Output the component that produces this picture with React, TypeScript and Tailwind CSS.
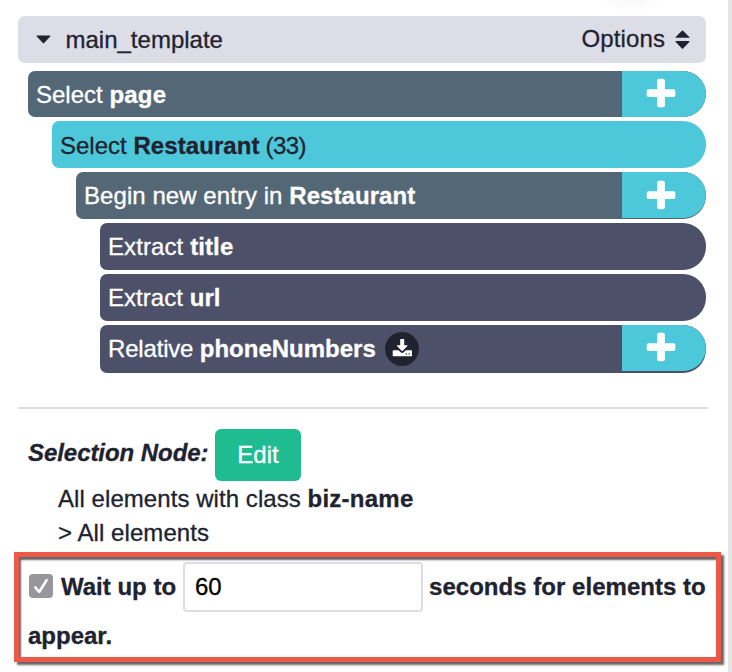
import type { ReactNode } from "react";

function Plus({ offset = "pb-[2px]" }: { offset?: string }) {
  return (
    <span className={`flex h-[46px] w-[84px] items-center justify-center rounded-r-[23px] bg-[#4dc8db] pr-[6px] ${offset}`}>
      <svg width="30" height="30" viewBox="0 0 30 30" fill="#fff">
        <rect x="0.7" y="11.2" width="28.6" height="7.8" rx="1.8" />
        <rect x="11.1" y="0.8" width="7.8" height="28.4" rx="1.8" />
      </svg>
    </span>
  );
}

function Row({ className, children, action }: { className: string; children: ReactNode; action?: ReactNode }) {
  return (
    <div className={`flex items-start justify-between overflow-hidden rounded-l-[7px] rounded-r-[23px] pl-2 ${className}`}>
      <div className="flex h-[47px] items-center whitespace-pre">{children}</div>
      {action}
    </div>
  );
}

function DownloadBadge() {
  return (
    <svg className="ml-[9px]" width="34" height="34" viewBox="0 0 34 34">
      <circle cx="17" cy="17" r="17" fill="#20232f" />
      <path d="M15.2 7.4q0-.5.5-.5h3q.5 0 .5.5v5.8h2.9q.8.2.3.9l-4.6 4.6q-.6.5-1.2 0L12 14.1q-.5-.7.3-.9h2.9z" fill="#fff" />
      <path d="M8.5 18.3h4.9l2.3 2q1.5 1.2 3 0l2.3-2h5.2q.8 0 .8.8v4.3q0 .8-.8.8H8.5q-.8 0-.8-.8v-4.3q0-.8.8-.8z" fill="#fff" />
      <path d="M20.8 21.2h1.2v1.4h-1.2zM23.6 21.2h1.2v1.4h-1.2z" fill="#20232f" />
    </svg>
  );
}

export default function App() {
  return (
    <div className="relative flex h-[672px] w-[732px] overflow-hidden bg-white font-['Liberation_Sans',Arial,sans-serif] text-[24px] leading-[34px] text-[#20232f] [-webkit-text-stroke:0.3px_currentColor]">
      <div className="absolute -top-[24px] left-[592px] h-[36px] w-[80px] rounded-full bg-[radial-gradient(closest-side,#f6f6f6,#ffffff)]" />
      <main className="flex w-[728px] flex-col pt-4 pl-[18px]">
        <header className="flex h-[47px] w-[688px] items-center justify-between rounded-[7px] bg-[#dddde7] pr-[16px] pl-[18px]">
          <div className="flex items-center gap-[14.5px]">
            <svg width="15" height="9" viewBox="0 0 15 9" fill="#20232f">
              <path d="M.8.6h13.4q.4.3 0 .8L8.1 8.1q-.6.6-1.2 0L.8 1.4Q.4.9.8.6z" />
            </svg>
            <span>main_template</span>
          </div>
          <div className="flex items-center gap-[10px]">
            <span className="pb-[2px] tracking-[0.1px]">Options</span>
            <svg width="15" height="20" viewBox="0 0 15 20" fill="#20232f">
              <path d="M.7 7.8Q.3 7.4.7 6.9L6.9.7q.6-.5 1.2 0l6.2 6.2q.4.5 0 .9zM.7 11Q.3 11.4.7 11.9l6.2 6.6q.6.5 1.2 0l6.2-6.6q.4-.5 0-.9z" />
            </svg>
          </div>
        </header>

        <section className="mt-2 flex w-[688px] flex-col gap-1 text-white">
          <Row className="ml-[10px] h-[46px] bg-[#546777]" action={<Plus />}>
            <span>Select <b className="tracking-[0.2px]">page</b></span>
          </Row>
          <Row className="ml-[34px] h-[47px] bg-[#4dc8db] text-[#20232f]">
            <span className="pt-[2px]">Select <b className="tracking-[0.08px]">Restaurant</b><span className="tracking-[-0.6px]"> (33)</span></span>
          </Row>
          <Row className="ml-[58px] h-[47px] bg-[#546777]" action={<Plus offset="pb-0" />}>
            <span className="tracking-[0.06px]">Begin new entry in <b>Restaurant</b></span>
          </Row>
          <Row className="ml-[82px] h-[47px] bg-[#4c5069]">
            <span className="tracking-[0.1px]">Extract <b>title</b></span>
          </Row>
          <Row className="ml-[82px] h-[47px] bg-[#4c5069]">
            <span className="tracking-[0.05px]">Extract <b>url</b></span>
          </Row>
          <Row className="ml-[82px] h-[48px] bg-[#4c5069]" action={<Plus />}>
            <span><span className="tracking-[-0.18px]">Relative </span><b>phoneNumbers</b></span>
            <DownloadBadge />
          </Row>
        </section>

        <hr className="mt-[34px] h-[2px] w-[690px] border-0 bg-[#dddde7]" />

        <section className="mt-5 flex flex-col pl-[10px]">
          <div className="flex h-[52px] items-start">
            <span className="w-[187px] pt-[7px] font-bold tracking-[-0.06px] whitespace-nowrap italic">Selection Node:</span>
            <button className="h-[52px] w-[86px] rounded-[6px] bg-[#1fbc91] text-white">Edit</button>
          </div>
          <div className="flex flex-col pt-px pl-[30px]">
            <span><span className="tracking-[0.06px]">All elements with class </span><b className="tracking-[0.25px]">biz-name</b></span>
            <span className="tracking-[0.07px]">&gt; All elements</span>
          </div>
        </section>

        <section className="mt-[2px] -ml-1 h-[110px] w-[707px] border-[5px] border-[#ee5849] pt-[5px] pl-[9px] font-bold shadow-[3px_3px_2px_#666,inset_2px_3px_2px_#666]">
          <div className="flex h-[50px] items-center whitespace-nowrap">
            <svg className="mr-2 mb-[2px] ml-px" width="24" height="24" viewBox="0 0 24 24">
              <rect width="24" height="24" rx="4" fill="#96969b" />
              <path d="M6.3 13.4l3.9 4.6L17.7 6" fill="none" stroke="#fff" strokeWidth="2.5" strokeLinecap="round" strokeLinejoin="round" />
            </svg>
            <span className="w-[122px]">Wait up to</span>
            <input className="h-[50px] w-[240px] rounded-[4px] border-2 border-[#dddde7] bg-white px-[10px] font-normal text-black outline-none" defaultValue="60" />
            <span className="ml-[6px] tracking-[0.03px]">seconds for elements to</span>
          </div>
          <div className="pt-[7px]">appear.</div>
        </section>
      </main>
      <div className="w-1 bg-[#e4e4e4]" />
    </div>
  );
}
